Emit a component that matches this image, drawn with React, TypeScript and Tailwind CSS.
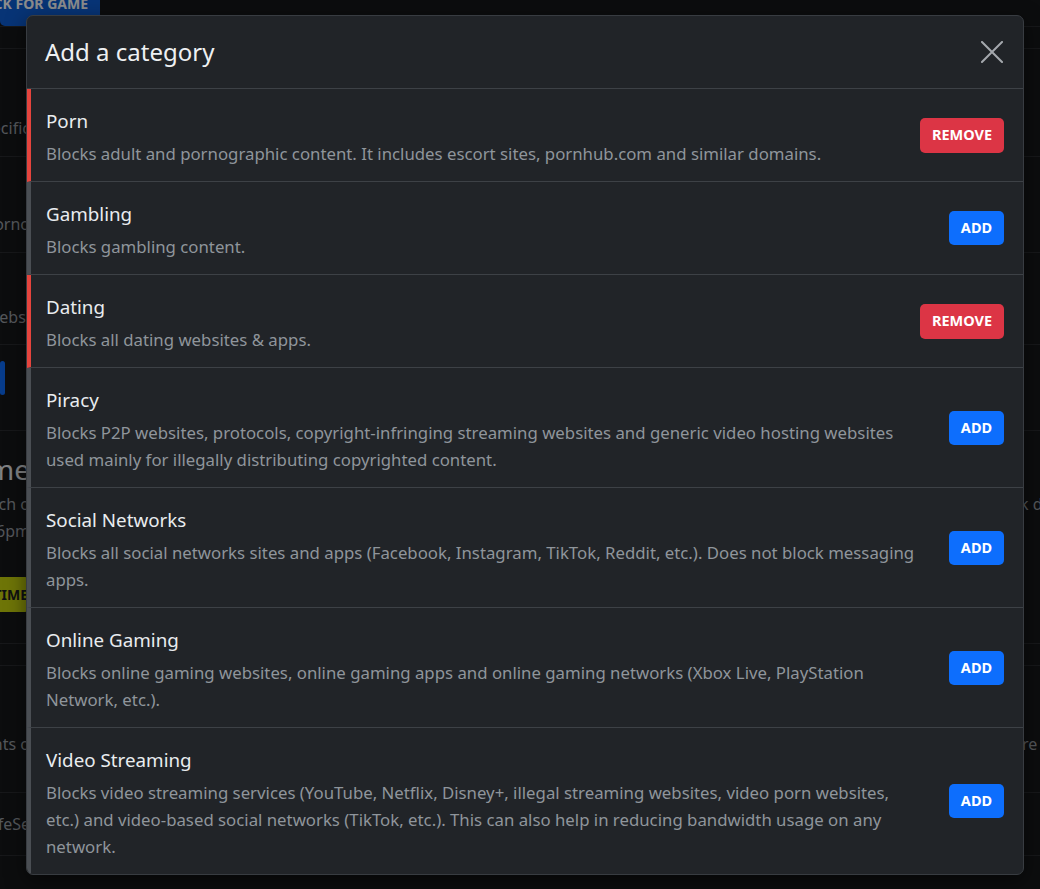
import React from "react";

type Category = {
  name: string;
  description: string;
  active: boolean;
};

const categories: Category[] = [
  {
    name: "Porn",
    description:
      "Blocks adult and pornographic content. It includes escort sites, pornhub.com and similar domains.",
    active: true,
  },
  { name: "Gambling", description: "Blocks gambling content.", active: false },
  { name: "Dating", description: "Blocks all dating websites & apps.", active: true },
  {
    name: "Piracy",
    description:
      "Blocks P2P websites, protocols, copyright-infringing streaming websites and generic video hosting websites used mainly for illegally distributing copyrighted content.",
    active: false,
  },
  {
    name: "Social Networks",
    description:
      "Blocks all social networks sites and apps (Facebook, Instagram, TikTok, Reddit, etc.). Does not block messaging apps.",
    active: false,
  },
  {
    name: "Online Gaming",
    description:
      "Blocks online gaming websites, online gaming apps and online gaming networks (Xbox Live, PlayStation Network, etc.).",
    active: false,
  },
  {
    name: "Video Streaming",
    description:
      "Blocks video streaming services (YouTube, Netflix, Disney+, illegal streaming websites, video porn websites, etc.) and video-based social networks (TikTok, etc.). This can also help in reducing bandwidth usage on any network.",
    active: false,
  },
];

// left strip text: right edge pinned, overflow goes off to the left
const Edge = ({ children, className = "" }: { children: React.ReactNode; className?: string }) => (
  <div className={"w-[30px] flex justify-end whitespace-nowrap " + className}>{children}</div>
);

// page that sits behind the modal, mostly hidden
const Background = () => (
  <div className="w-[1040px] h-[889px] overflow-hidden bg-[#16181b] text-[#9a9fa5] text-base">
    <div className="h-[27px] flex items-end border-b border-[#2a2d31]">
      <div className="h-[36px] w-[100px] bg-[#0d5fd8] rounded-[5px] flex items-end justify-end pr-3 pb-[12px] text-[14px] font-bold text-white whitespace-nowrap">
        BLOCK FOR GAME
      </div>
    </div>
    <div className="h-[22px] border-b border-[#2a2d31]" />
    <div className="h-[108px] flex items-end pb-[16px] border-b border-[#2a2d31]">
      <Edge>Block a specific</Edge>
    </div>
    <div className="h-[96px] flex items-end pb-[16px] border-b border-[#2a2d31]">
      <Edge>Category porno</Edge>
    </div>
    <div className="h-[92px] flex items-end pb-[15px] border-b border-[#2a2d31]">
      <Edge>Dating websi</Edge>
    </div>
    <div className="h-[86px] flex items-start pt-[16px] border-b border-[#2a2d31]">
      <Edge>
        <div className="h-[34px] w-[70px] bg-[#0d6efd] rounded-[5px] mr-[25px]" />
      </Edge>
    </div>
    <div className="pt-[19px] flex flex-col">
      <Edge className="text-[28px] leading-[38px] text-[#e9ecef] mr-[-2px]">Screen Time</Edge>
      <div className="flex justify-between leading-[27px] mt-[3px]">
        <Edge>Block apps each o</Edge>
        <span className="w-[20px] whitespace-nowrap overflow-hidden">k d</span>
      </div>
      <Edge className="leading-[27px]">at 6pm</Edge>
    </div>
    <div className="h-[99px] flex items-center border-b border-[#2a2d31]">
      <Edge>
        <div className="h-[35px] w-[120px] bg-[#c8d50d] rounded-[5px] flex items-center justify-end pr-[2px] text-[14px] font-bold text-[#1c1f22]">
          ADD TIME
        </div>
      </Edge>
    </div>
    <div className="h-[22px] border-b border-[#2a2d31]" />
    <div className="h-[127px] flex items-center justify-between pt-[30px] border-b border-[#2a2d31]">
      <Edge>Blocks the contents o</Edge>
      <span className="w-[18px] whitespace-nowrap overflow-hidden">re</span>
    </div>
    <div className="h-[63px] flex items-center border-b border-[#2a2d31]">
      <Edge>SafeSe</Edge>
    </div>
    <div className="h-[40px] border-b border-[#2a2d31]" />
  </div>
);

const CloseIcon = () => (
  <svg width="22" height="22" viewBox="0 0 22 22" fill="none" stroke="#a4a8ad" strokeWidth="2" strokeLinecap="square">
    <path d="M1 1 L21 21 M21 1 L1 21" />
  </svg>
);

const CategoryRow = ({ c }: { c: Category }) => (
  <div
    className={
      c.active
        ? "flex items-center border-l-4 border-l-[#e5443d] border-b border-b-[#3d4146] last:border-b-0"
        : "flex items-center border-l-4 border-l-[#4a4e53] border-b border-b-[#3d4146] last:border-b-0"
    }
  >
    <div className="flex-1 pl-[15px] pr-[28px] pt-[18px] pb-[14px]">
      <div className="text-[18.8px] leading-[28px] text-[#e9ecef] mb-[5px]">{c.name}</div>
      <div className="text-[16.8px] leading-[27px] text-[#8f959b]">{c.description}</div>
    </div>
    <div className="pr-[19px]">
      {c.active ? (
        <button className="h-[35px] w-[84px] rounded-[5px] bg-[#dc3545] text-white text-[14.5px] font-bold">
          REMOVE
        </button>
      ) : (
        <button className="h-[34px] w-[55px] rounded-[5px] bg-[#0d6efd] text-white text-[14.5px] font-bold">
          ADD
        </button>
      )}
    </div>
  </div>
);

export default function App() {
  return (
    <div className="relative w-[1040px] h-[889px] overflow-hidden font-['Noto_Sans','Open_Sans',sans-serif]">
      <Background />
      <div className="absolute inset-0 bg-black/45 pt-[15px] pl-[26px]">
        <div className="w-[998px] bg-[#212428] border border-[#383c41] rounded-[7px] overflow-hidden shadow-[0_6px_20px_rgba(0,0,0,0.5)]">
          <div className="h-[73px] flex items-center justify-between pl-[18px] pr-[20px] border-b border-[#3d4146]">
            <h5 className="text-[24px] text-[#eef0f2]">Add a category</h5>
            <CloseIcon />
          </div>
          <div className="flex flex-col">
            {categories.map((c) => (
              <CategoryRow key={c.name} c={c} />
            ))}
          </div>
        </div>
      </div>
    </div>
  );
}
